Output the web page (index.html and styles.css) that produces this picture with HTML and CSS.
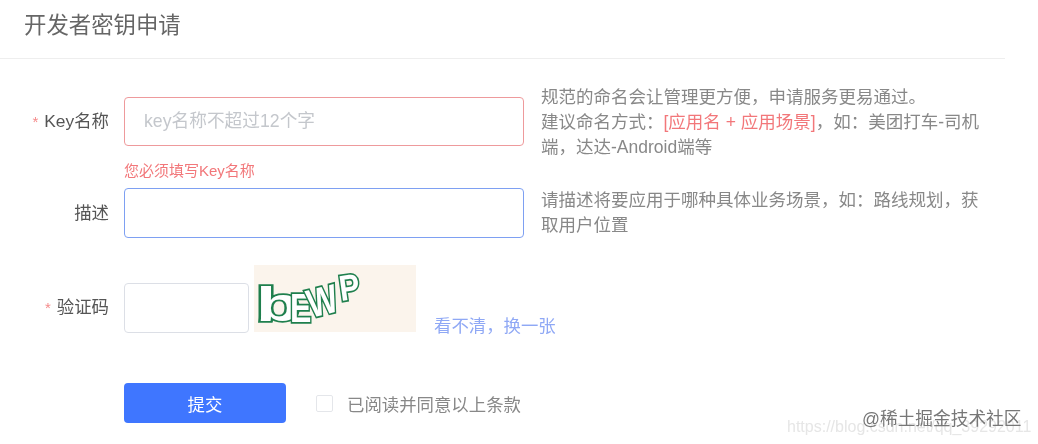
FILE: index.html
```html
<!DOCTYPE html>
<html lang="zh-CN">
<head>
	<meta charset="UTF-8">
	<title>开发者密钥申请</title>
	<link rel="stylesheet" href="styles.css">
</head>
<body>
	<div class="page">
		<h2 class="title">开发者密钥申请</h2>
		<form class="form" action="#">
			<div class="row row_key">
				<label class="label"><span class="star">*</span>Key名称</label>
				<div class="field">
					<input class="input input_error" type="text" placeholder="key名称不超过12个字">
					<p class="error">您必须填写Key名称</p>
				</div>
				<p class="help">规范的命名会让管理更方便，申请服务更易通过。<br>建议命名方式：<span class="mark">[应用名 + 应用场景]</span>，如：美团打车-司机端，达达-Android端等</p>
			</div>
			<div class="row row_desc">
				<label class="label">描述</label>
				<div class="field">
					<input class="input input_focus" type="text">
				</div>
				<p class="help">请描述将要应用于哪种具体业务场景，如：路线规划，获取用户位置</p>
			</div>
			<div class="row row_code">
				<label class="label"><span class="star">*</span>验证码</label>
				<input class="input input_code" type="text">
				<svg class="captcha" width="162" height="67" viewBox="0 0 162 67">
					<rect width="162" height="67" fill="#fbf4ec"></rect>
					<g class="captcha_text">
						<text transform="translate(2 56) scale(1.45 0.95)" font-size="50">b</text>
						<text transform="translate(36 57) scale(0.8 1)" font-size="40">E</text>
						<text transform="translate(57 53) rotate(-14) scale(0.8 1)" font-size="40">W</text>
						<text transform="translate(87 36) rotate(-8) scale(0.85 1)" font-size="36">P</text>
					</g>
				</svg>
				<a class="refresh" href="#">看不清，换一张</a>
			</div>
			<div class="row row_submit">
				<button class="submit" type="button">提交</button>
				<span class="check"></span>
				<span class="agree">已阅读并同意以上条款</span>
			</div>
		</form>
	</div>
	<div class="mark_csdn">https://blog.csdn.net/qq_39292011</div>
	<div class="mark_juejin">@稀土掘金技术社区</div>
</body>
</html>
```

FILE: styles.css
```css
html,body{
	margin: 0;
	height: 100%;
	background: #fff;
	overflow: hidden;
}
body{
	font-family: "Liberation Sans", "Noto Sans CJK SC", sans-serif;
	color: #555;
	position: relative;
}
h2,p{
	margin: 0;
}
.page{
	filter: blur(0.5px);
}
.title{
	width: 981px;
	height: 58px;
	padding-left: 24px;
	border-bottom: 1px solid #eee;
	font-size: 22.4px;
	font-weight: normal;
	line-height: 52px;
	color: #666;
}
.form{
	padding-top: 26px;
}
.row{
	display: flex;
}
.label{
	width: 109px;
	flex: none;
	margin-right: 15px;
	text-align: right;
	font-size: 17.4px;
	line-height: 49px;
	color: #555;
}
.star{
	margin-right: 6px;
	font-size: 15px;
	color: #f58a8a;
}
.field{
	width: 400px;
	flex: none;
}
.input{
	display: block;
	box-sizing: border-box;
	width: 100%;
	height: 49px;
	padding: 0 19px;
	background: #fff;
	border: 1.5px solid #dcdfe6;
	border-radius: 4px;
	outline: none;
	font: 17.7px "Liberation Sans", "Noto Sans CJK SC", sans-serif;
}
.input::placeholder{
	color: #c4c7cc;
}
.input_error{
	border-color: #ee9a9c;
}
.input_focus{
	height: 50px;
	border-color: #7ea0f2;
}
.input_code{
	width: 125px;
	height: 50px;
	flex: none;
}
.error{
	margin-top: 16px;
	font-size: 15px;
	line-height: 18px;
	color: #f2777a;
}
.help{
	width: 440px;
	margin-left: 17px;
	font-size: 17.5px;
	line-height: 25px;
	color: #888;
}
.mark{
	color: #f2777a;
}
.row_key .field,.row_key .label{
	padding-top: 12px;
}
.row_desc{
	margin-top: 8px;
}
.row_desc .label{
	line-height: 50px;
}
.row_code{
	margin-top: 27px;
	align-items: flex-end;
}
.row_code .label{
	line-height: 50px;
}
.captcha{
	flex: none;
	margin: 0 0 1px 5px;
}
.captcha_text text{
	font-family: "Liberation Sans", sans-serif;
	font-weight: bold;
	fill: #fff;
	stroke: #1f7f4d;
	stroke-width: 3.5;
	paint-order: stroke;
}
.refresh{
	margin: 0 0 0 18px;
	font-size: 17.4px;
	line-height: 14px;
	color: #8fa8f5;
	text-decoration: none;
}
.row_submit{
	margin: 50px 0 0 124px;
	align-items: center;
}
.submit{
	width: 162px;
	height: 40px;
	border: none;
	border-radius: 4px;
	background: #3f76ff;
	color: #fff;
	font: 17.4px "Liberation Sans", "Noto Sans CJK SC", sans-serif;
}
.check{
	box-sizing: border-box;
	width: 17px;
	height: 17px;
	margin: 0 14px 0 30px;
	border: 1.5px solid #e4e6ea;
	border-radius: 2px;
}
.agree{
	font-size: 17.4px;
	color: #888;
}
/* 图片水印，压在内容上面 */
.mark_juejin{
	position: absolute;
	left: 862px;
	top: 408px;
	font-size: 17.7px;
	line-height: 22px;
	color: #777;
	filter: blur(0.5px);
}
.mark_csdn{
	position: absolute;
	left: 787px;
	top: 417px;
	font-size: 16px;
	line-height: 20px;
	color: #e6e6e6;
	filter: blur(0.6px);
}
```
